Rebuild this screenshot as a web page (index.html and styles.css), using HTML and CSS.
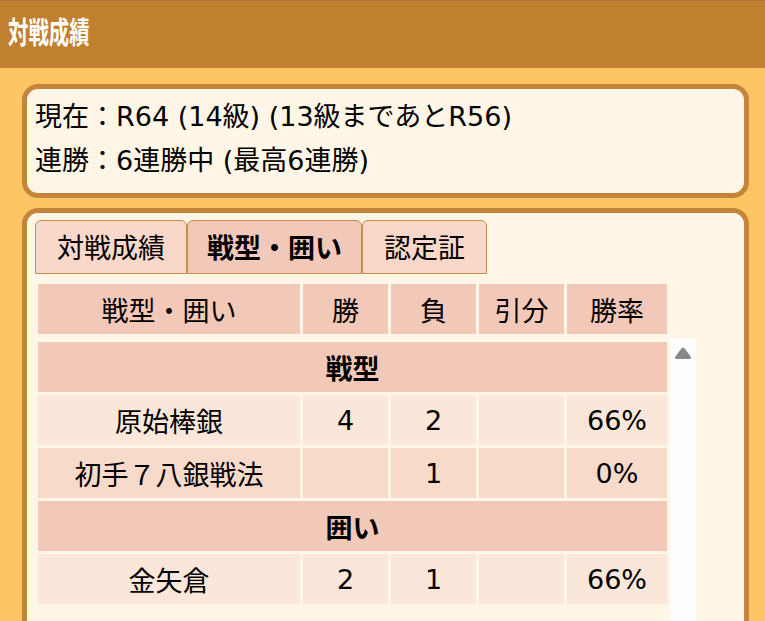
FILE: index.html
```html
<!DOCTYPE html>
<html lang="ja">
<head>
  <meta charset="UTF-8" />
  <title>対戦成績</title>
  <link rel="stylesheet" href="styles.css">
</head>
<body>

  <header class="topbar">
    <h1 class="title"><span>対戦成績</span></h1>
  </header>

  <main class="content">
    <section class="card status">
      <p>現在：R64 (14級) (13級まであとR56)</p>
      <p>連勝：6連勝中 (最高6連勝)</p>
    </section>

    <section class="card record">
      <ul class="tabs">
        <li class="tab">対戦成績</li>
        <li class="tab active">戦型・囲い</li>
        <li class="tab">認定証</li>
      </ul>

      <table class="grid">
        <colgroup>
          <col class="c-name"><col class="c-num"><col class="c-num"><col class="c-num"><col class="c-rate">
        </colgroup>
        <thead>
          <tr>
            <th>戦型・囲い</th>
            <th>勝</th>
            <th>負</th>
            <th>引分</th>
            <th>勝率</th>
          </tr>
        </thead>
      </table>

      <div class="scroll-area">
        <table class="grid">
          <colgroup>
            <col class="c-name"><col class="c-num"><col class="c-num"><col class="c-num"><col class="c-rate">
          </colgroup>
          <tbody>
            <tr class="group"><td colspan="5">戦型</td></tr>
            <tr class="odd"><td>原始棒銀</td><td>4</td><td>2</td><td></td><td>66%</td></tr>
            <tr class="even"><td>初手７八銀戦法</td><td></td><td>1</td><td></td><td>0%</td></tr>
            <tr class="group"><td colspan="5">囲い</td></tr>
            <tr class="odd"><td>金矢倉</td><td>2</td><td>1</td><td></td><td>66%</td></tr>
          </tbody>
        </table>
        <div class="scrollbar">
          <svg width="26" height="26" viewBox="0 0 26 26">
            <polygon points="13,10 19.5,18.5 6.5,18.5" fill="#898989" stroke="#898989" stroke-width="3" stroke-linejoin="round" />
          </svg>
        </div>
      </div>
    </section>
  </main>

</body>
</html>
```

FILE: styles.css
```css
* {
  box-sizing: border-box;
}
body {
  background: #ffc463;
  color: #000;
  font-family: 'DejaVu Sans', 'Noto Sans CJK JP', sans-serif;
  font-size: 27px;
  margin: 0;
  overflow: hidden;
}
.topbar {
  background: #c1802f;
  border-top: 1px solid #b3752f;
  height: 68px;
  display: flex;
  align-items: center;
  padding: 0 8px 10px;
}
.title {
  margin: 0;
  color: #fff;
  font-family: 'Noto Sans CJK JP', sans-serif;
  font-size: 30px;
  font-weight: bold;
  line-height: 1;
}
.title span {
  display: inline-block;
  transform: scaleX(0.68);
  transform-origin: left center;
}
.content {
  padding: 16px 16px 0 22px;
}
.card {
  background: #fff6e7;
  border: 5px solid #c4843a;
  border-radius: 16px;
}
.status {
  padding: 6px 8px 10px;
}
.status p {
  margin: 0;
  line-height: 44px;
}
.record {
  margin-top: 10px;
  padding: 7px 8px 0;
  height: 460px;
}
.tabs {
  list-style: none;
  margin: 0;
  padding: 0;
  display: flex;
}
.tab {
  background: #f9d8c9;
  border: 1px solid #c98b4b;
  border-radius: 6px 6px 0 0;
  height: 54px;
  line-height: 48px;
  padding: 4px 21px 0;
}
.tab.active {
  background: #f2c8b8;
  font-weight: bold;
  padding: 4px 19px 0;
}
.grid {
  border-collapse: separate;
  border-spacing: 3px;
  table-layout: fixed;
  width: 634px;
}
.tabs + .grid {
  margin-top: 7px;
}
.c-name {
  width: 262px;
}
.c-num {
  width: 85px;
}
.c-rate {
  width: 100px;
}
th, td {
  height: 50px;
  padding: 0;
  text-align: center;
  vertical-align: middle;
  font-weight: normal;
  background: #f2c8b9;
}
tr.group td {
  font-weight: bold;
}
tr.odd td {
  background: #fbe7da;
}
tr.even td {
  background: #f8dacb;
}
.scroll-area {
  margin-top: 2px;
  display: flex;
  align-items: flex-start;
  height: 330px;
}
.scrollbar {
  width: 26px;
  align-self: stretch;
  background: #fdfdfd;
}
.scrollbar svg {
  display: block;
}
```
